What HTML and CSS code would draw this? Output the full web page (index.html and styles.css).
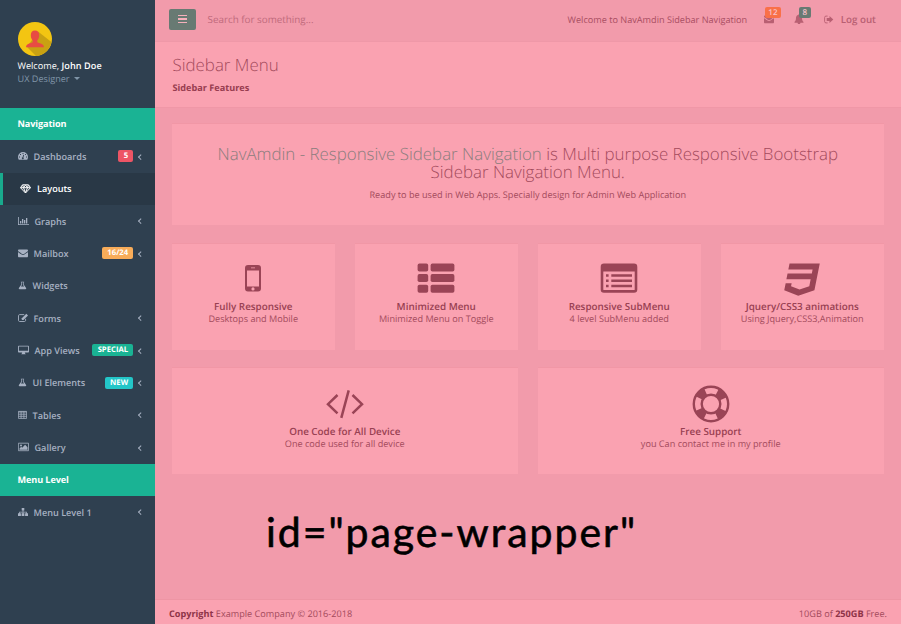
FILE: index.html
```html
<!DOCTYPE html>
<html lang="en">
<head>
<meta charset="utf-8">
<title>NavAmdin Sidebar Navigation</title>
<link rel="stylesheet" href="styles.css">
</head>
<body>
<div class="app">
<nav class="sidebar">
  <div class="profile">
    <svg class="avatar" viewBox="0 0 34 34"><circle cx="17" cy="17" r="17" fill="#f3c512"/><path d="M20 9.5 33.4 20A17 17 0 0 1 18 34L9 25Z" fill="#c9a112"/><path d="M17 8.5c2.8 0 4.2 1.9 4.2 4.700 0 2.400-.8 4-1.900 5v2c1.500 1.100 6.700 1.200 6.700 5H8c0-3.800 5.200-3.900 6.700-5v-2c-1.100-1-1.900-2.600-1.900-5 0-2.800 1.400-4.700 4.200-4.700z" fill="#e84c43"/></svg>
    <div class="hello">Welcome, <b>John Doe</b></div>
    <div class="role">UX Designer <i class="caret"></i></div>
  </div>
  <div class="section">Navigation</div>
  <a class="item"><svg class="ic" viewBox="0 0 10 10"><path fill-rule="evenodd" d="M0 6a5 5 0 0 1 10 0c0 1-.3 1.900-.8 2.700H.8C.3 7.900 0 7 0 6zM4.500 2h1v1h-1zM2 3h1v1H2zM1 5.500h1v1H1zM8 5.500h1v1H8zM7 3h.9v1H7zM5.300 3.800l-.7 2.400a1 1 0 1 0 .8.200l.7-2.400z"/></svg><span>Dashboards</span><em class="tag red">5</em><i class="chev"></i></a>
  <a class="item active"><svg class="ic gem" viewBox="0 0 11 10"><path d="M2.500.8h6l2 2.900-5 5.300-5-5.300zM.5 3.700h10M3.500 3.700l2 5 2-5M2.700 1l.8 2.700 2-2.700 2 2.700.8-2.700" fill="none" stroke="currentColor" stroke-width="1"/></svg><span>Layouts</span></a>
  <a class="item"><svg class="ic w11" viewBox="0 0 11 10"><path d="M0 1h.8v7.200H11V9H0zM2 5h1.300v2.600H2zM4 3h1.300v4.600H4zM6 4h1.300v3.600H6zM8 2h1.300v5.600H8z"/></svg><span>Graphs</span><i class="chev"></i></a>
  <a class="item"><svg class="ic" viewBox="0 100 1792 1600"><use href="#envelope"/></svg><span>Mailbox</span><em class="tag orange">16/24</em><i class="chev"></i></a>
  <a class="item"><svg class="ic flask" viewBox="0 0 9 10"><path fill-rule="evenodd" d="M2.700.7h3.600v.8h-.5v2.300l2.700 4.100c.4.700.1 1.300-.7 1.300H1.200c-.8 0-1.100-.6-.7-1.300l2.700-4.100V1.500h-.5zM4 1.500v2.600L2.800 6h3.400L5 4.100V1.500z"/></svg><span>Widgets</span></a>
  <a class="item"><svg class="ic" viewBox="0 0 10 10"><path d="M7.600 5.800v1.600c0 .6-.5 1.100-1.100 1.100H1.600C1 8.500.5 8 .5 7.400V2.700c0-.6.5-1.100 1.100-1.100h4.600" fill="none" stroke="currentColor" stroke-width=".9"/><path d="M8.300.8 10 2.400 5.500 6.900H3.800V5.200z"/></svg><span>Forms</span><i class="chev"></i></a>
  <a class="item"><svg class="ic w11" viewBox="0 0 11 10"><path fill-rule="evenodd" d="M.8.700h9.400c.5 0 .8.300.8.800v5.300c0 .5-.3.800-.8.800H6.800l.3 1 .6.300v.4H3.300v-.4l.6-.3.300-1H.8C.3 7.600 0 7.300 0 6.800V1.500C0 1 .3.700.8.700zM.9 1.500v4.300h9.200V1.500z"/></svg><span>App Views</span><em class="tag green">SPECIAL</em><i class="chev"></i></a>
  <a class="item"><svg class="ic flask" viewBox="0 0 9 10"><path fill-rule="evenodd" d="M2.700.7h3.600v.8h-.5v2.300l2.700 4.100c.4.700.1 1.300-.7 1.300H1.200c-.8 0-1.100-.6-.7-1.300l2.700-4.100V1.500h-.5zM4 1.500v2.600L2.800 6h3.400L5 4.100V1.500z"/></svg><span>UI Elements</span><em class="tag cyan">NEW</em><i class="chev"></i></a>
  <a class="item"><svg class="ic w9" viewBox="0 0 9 10"><path d="M.4 1.400h8.200v7H.4zM.4 2h8.200M.4 4.200h8.200M.4 6.300h8.200M3.100 1.400v7M5.900 1.400v7" fill="none" stroke="currentColor" stroke-width=".8"/></svg><span>Tables</span><i class="chev"></i></a>
  <a class="item"><svg class="ic w11" viewBox="0 0 11 10"><path d="M.4 1.200h10.100v7.500H.4z" fill="none" stroke="currentColor" stroke-width=".8"/><circle cx="3" cy="3.500" r="1"/><path d="M1.500 7.700V6.400l1.700-1.600 1 1 2.900-3 2.400 2.400v2.500z"/></svg><span>Gallery</span><i class="chev"></i></a>
  <div class="section">Menu Level</div>
  <a class="item"><svg class="ic" viewBox="0 0 10 10"><path d="M3.700 1h2.600v2.600h-.9v1.100h3.400v1.500H10v2.700H7.100V6.200H8V5.400H5.400v.8h1v2.700H3.600V6.200h1v-.8H2v.8h.9v2.700H0V6.200h1.200V4.700h3.400V3.600h-.9z"/></svg><span>Menu Level 1</span><i class="chev"></i></a>
</nav>
<main class="page">
  <header class="topbar">
    <button class="toggle" aria-label="Toggle menu"><i></i><i></i><i></i></button>
    <span class="search">Search for something...</span>
    <span class="welcome">Welcome to NavAmdin Sidebar Navigation</span>
    <span class="note mail"><svg viewBox="0 100 1792 1600"><path id="envelope" d="M1792 710v794q0 66-47 113t-113 47h-1472q-66 0-113-47t-47-113v-794q44 49 101 87 362 246 497 345 57 42 92.500 65.500t94.500 48 110 24.500h2q51 0 110-24.500t94.500-48 92.500-65.500q170-123 498-345 57-39 100-87zm0-294q0 79-49 151t-122 123q-376 261-468 325-10 7-42.500 31t-54 38.500-52 32.500-57.500 27-50 9h-2q-23 0-50-9t-57.500-27-52-32.500-54-38.500-42.500-31q-91-64-262-182.500t-205-142.500q-62-42-117-115.500t-55-136.500q0-78 41.500-130t118.500-52h1472q65 0 112.500 47t47.500 113z"/></svg><em class="count hot">12</em></span>
    <span class="note bell"><svg viewBox="0 0 10 10"><path d="M5 .2c.4 0 .6.200.6.600C7.300 1.200 8 2.500 8 4c0 2.300.7 3.300 1.700 4.100 0 .4-.3.700-.7.700H6.400a1.400 1.400 0 0 1-2.800 0H1c-.4 0-.7-.3-.7-.7C1.300 7.300 2 6.300 2 4c0-1.500.7-2.800 2.400-3.200 0-.4.2-.6.600-.6z"/></svg><em class="count calm">8</em></span>
    <span class="logout"><svg viewBox="0 0 10 9"><path d="M3.600 1.100H2C1.100 1.100.6 1.600.6 2.500v4c0 .9.500 1.400 1.400 1.400h1.600" fill="none" stroke="currentColor" stroke-width=".9"/><path d="M5.500 1 9.300 4.500 5.500 8V6H2.700V3h2.800z"/></svg>Log out</span>
  </header>
  <section class="heading"><h2>Sidebar Menu</h2><strong>Sidebar Features</strong></section>
  <section class="content">
    <div class="panel hero"><h1><span>NavAmdin - Responsive Sidebar Navigation</span> is Multi purpose Responsive Bootstrap<br>Sidebar Navigation Menu.</h1><p>Ready to be used in Web Apps. Specially design for Admin Web Application</p></div>
    <div class="grid four">
      <div class="panel"><svg class="big" viewBox="0 0 38 38"><path fill-rule="evenodd" d="M14 6h10a3 3 0 0 1 3 3v20.500a3 3 0 0 1-3 3H14a3 3 0 0 1-3-3V9a3 3 0 0 1 3-3zM13 11.500v16h12v-16zM17 8.500h4v.8h-4zM19 28.300a1.600 1.600 0 1 0 0 3.200 1.600 1.600 0 0 0 0-3.200z"/></svg><b>Fully Responsive</b><span>Desktops and Mobile</span></div>
      <div class="panel"><svg class="big" viewBox="0 0 38 38"><g><rect x=".6" y="4.600" width="10.600" height="8" rx="1.800"/><rect x="13.600" y="4.600" width="23.800" height="8" rx="1.800"/><rect x=".6" y="15.100" width="10.600" height="8" rx="1.800"/><rect x="13.600" y="15.100" width="23.800" height="8" rx="1.800"/><rect x=".6" y="25.700" width="10.600" height="8" rx="1.800"/><rect x="13.600" y="25.700" width="23.800" height="8" rx="1.800"/></g></svg><b>Minimized Menu</b><span>Minimized Menu on Toggle</span></div>
      <div class="panel"><svg class="big" viewBox="0 0 38 38"><path fill-rule="evenodd" d="M4 4.600h30a3.300 3.300 0 0 1 3.300 3.300v22.500a3.300 3.300 0 0 1-3.300 3.300H4a3.300 3.300 0 0 1-3.300-3.300V7.900A3.300 3.300 0 0 1 4 4.600zM3.300 12.600v17.800c0 .4.300.7.700.7h30c.4 0 .7-.3.700-.7V12.600z"/><path d="M6 15.200h2.600v2.500H6zM11.300 15.200H32v2.500H11.300zM6 20.500h2.600V23H6zM11.300 20.500H32V23H11.300zM6 25.800h2.600v2.500H6zM11.300 25.800H32v2.500H11.300z"/></svg><b>Responsive SubMenu</b><span>4 level SubMenu added</span></div>
      <div class="panel"><svg class="big" viewBox="0 -100 1792 1892"><path d="M275 128h1505l-266 1333-804 267-698-267 71-356h297l-29 147 422 161 486-161 68-339h-1208l58-297h1209l38-191h-1208z"/></svg><b>Jquery/CSS3 animations</b><span>Using Jquery,CSS3,Animation</span></div>
    </div>
    <div class="grid two">
      <div class="panel"><svg class="big code" viewBox="0 0 38 38"><path d="M11.500 10 2 19.200l9.500 9.200M26.500 10l9.500 9.200-9.500 9.200M22.700 5.400 15.300 32.800" fill="none" stroke="currentColor" stroke-width="2.500"/></svg><b>One Code for All Device</b><span>One code used for all device</span></div>
      <div class="panel"><svg class="big ring" viewBox="0 0 38 38"><g fill="none" stroke="currentColor"><circle cx="19" cy="19" r="17.200" stroke-width="2.400"/><circle cx="19" cy="19" r="9.300" stroke-width="2.400"/><circle cx="19" cy="19" r="13.200" stroke-width="8" stroke-dasharray="9 11.730" stroke-dashoffset="-5.900"/></g></svg><b>Free Support</b><span>you Can contact me in my profile</span></div>
    </div>
    <div class="caption">id="page-wrapper"</div>
  </section>
  <footer class="footer"><span><b>Copyright</b> Example Company © 2016-2018</span><span>10GB of <b>250GB</b> Free.</span></footer>
</main>
</div>
</body>
</html>
```
FILE: styles.css
```css
* { box-sizing: border-box; }
body { margin: 0; font: 9.15px/13px "Open Sans", sans-serif; text-rendering: geometricPrecision; color: #a34a5c; }
h1, h2, p { margin: 0; font-weight: 300; }
svg { fill: currentColor; display: block; flex: none; }
em, i { font-style: normal; }
b, strong { font-weight: 700; }
.app { display: flex; width: 901px; height: 624px; overflow: hidden; }
.sidebar { width: 155px; background: #2f4050; color: #a7b1c2; flex: none; }
.profile { height: 108px; padding: 22px 0 0 17.500px; }
.avatar { width: 34px; height: 34px; margin: 0 0 3px; }
.hello { color: #fff; }
.hello b { font-weight: 600; letter-spacing: .05px; }
.role { color: #8095a8; display: flex; align-items: center; }
.caret { margin-left: 4px; border: 3px solid transparent; border-top-color: currentColor; border-bottom: 0; }
.section { height: 32.330px; line-height: 32.330px; padding-left: 17.500px; background: #1ab394; color: #fff; font-weight: 700; letter-spacing: -.1px; }
.item { height: 32.330px; padding: 0 12.500px 0 17.500px; display: flex; align-items: center; font-weight: 600; }
.item.active { background: #293846; color: #fff; border-left: 3px solid #19aa8d; }
.ic { width: 10px; height: 10px; margin-right: 6px; }
.ic.w11 { width: 11px; }
.ic.w9 { width: 9px; }
.ic.flask { width: 9px; height: 9px; }
.ic.gem { width: 11px; margin-left: -.5px; }
.item span { flex: 1; white-space: nowrap; }
.tag { height: 12px; line-height: 12px; border-radius: 2px; padding: 0 5.300px; margin-right: 4px; font-size: 7.700px; font-weight: 700; color: #fff; }
.red { background: #ed5565; }
.orange { background: #f8ac59; }
.green { background: #1ab394; }
.cyan { background: #23c6c8; }
.chev { width: 3.600px; height: 3.600px; margin: 0 0 0 1.500px; border: solid currentColor; border-width: 0 0 1px 1px; transform: rotate(45deg); }
.page { flex: 1; display: flex; flex-direction: column; background: #f29bab; min-width: 0; }
.topbar { height: 42px; display: flex; align-items: center; padding: 0 25px 3px 14px; color: #b85f72; border-bottom: 1px solid #ef98a8; }
.toggle { width: 27px; height: 21px; padding: 0; border: 0; border-radius: 2px; background: #687a73; display: flex; flex-direction: column; align-items: center; justify-content: center; gap: 2px; }
.toggle i { width: 9px; height: 1.400px; background: #f5b0bb; }
.search { margin-left: 11.500px; font-size: 9.860px; color: #c06a7c; flex: 1; }
.welcome { color: #a94e62; }
.note { position: relative; width: 10px; }
.note svg { width: 10px; height: 10px; }
.mail { margin-left: 16.500px; }
.bell { margin-left: 20.500px; }
.count { position: absolute; top: -7.500px; height: 11px; line-height: 11px; font-size: 8px; border-radius: 2px; text-align: center; font-weight: 600; color: #f8c0c8; }
.hot { left: 1.500px; width: 15.500px; background: #f97048; }
.calm { left: 5px; width: 11.500px; background: #687a73; }
.logout { margin-left: 20px; display: flex; align-items: center; font-weight: 600; font-size: 9.800px; }
.logout svg { width: 10px; height: 9px; margin-right: 6.500px; }
.heading { height: 66px; background: #faa2b1; border-bottom: 1px solid #f097a7; padding: 13px 17.500px 0; color: #983d50; }
.heading h2 { font-size: 16.900px; line-height: 20px; margin-bottom: 6px; color: #a34a5c; }
.heading strong { display: block; }
.content { flex: 1; padding: 15px 17.500px 0 17px; }
.panel { background: #faa2b1; border-top: 1px solid #f197a6; text-align: center; display: flex; flex-direction: column; align-items: center; }
.hero { height: 102px; padding-top: 21px; }
.hero h1 { font-size: 16.900px; line-height: 18.300px; margin-bottom: 6px; }
.hero p { font-weight: 400; }
.hero h1 span { color: #8b7d7d; }
.grid { display: grid; gap: 20.500px; margin-top: 18px; }
.four { grid-template-columns: repeat(4, 1fr); }
.two { grid-template-columns: repeat(2, 1fr); margin-top: 17.500px; }
.grid .panel { height: 106.500px; padding-top: 14.500px; line-height: 12px; }
.two .panel { padding-top: 17px; }
.big { width: 38px; height: 38px; margin-bottom: 3px; color: #9a4456; }
.two .big { margin-bottom: 1.500px; }
.grid b { font-weight: 600; font-size: 9.860px; color: #983f52; line-height: 13px; }
.caption { margin: 33.500px 0 0 94px; font: 41px/50px Lato, sans-serif; letter-spacing: 1.950px; color: #000; white-space: nowrap; -webkit-text-stroke: .6px #000; }
.footer { height: 25px; padding: 2px 14px 0; border-top: 1px solid #ee95a4; background: #faa2b1; display: flex; justify-content: space-between; align-items: center; }
.footer b { color: #8e3448; }
```
